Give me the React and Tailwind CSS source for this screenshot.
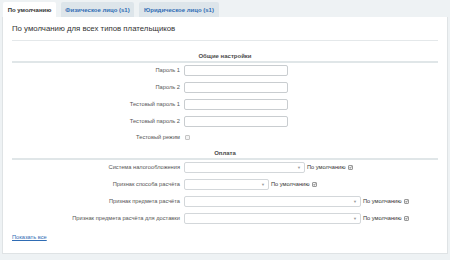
import React from "react";

const F = { fontFamily: '"Liberation Sans", Arial, sans-serif' };

function Label({ children }) {
  return (
    <div className="w-[172px] shrink-0 text-right pr-[4px] text-[5.7px] text-[#555] leading-none">{children}</div>
  );
}

function Input() {
  return <div className="w-[104px] h-[11px] bg-white border border-[#c9cdd0] rounded-[2px]" />;
}

function Select({ w }) {
  return (
    <div className={`${w} h-[11px] bg-white border border-[#d3d7da] rounded-[2px] flex items-center justify-end pr-[3px]`}>
      <div className="text-[4px] text-[#999] leading-none">▼</div>
    </div>
  );
}

function Check({ checked }) {
  return (
    <div className={`w-[5px] h-[5px] border ${checked ? "border-[#999]" : "border-[#c4c4c4]"} bg-[#f4f4f4] rounded-[1px] flex items-center justify-center`}>
      {checked && (
        <svg width="5" height="5" viewBox="0 0 5 5">
          <path d="M0.8 2.6 L2 3.8 L4.3 0.9" stroke="#333" strokeWidth="1" fill="none" />
        </svg>
      )}
    </div>
  );
}

function Default() {
  return (
    <div className="flex items-center ml-[2px]">
      <div className="text-[5.7px] text-[#333] leading-none">По умолчанию</div>
      <div className="ml-[3px]"><Check checked /></div>
    </div>
  );
}

function Section({ title, mt }) {
  return (
    <div className={`flex flex-col ${mt}`}>
      <div className="text-center text-[6px] font-bold text-[#4b4b4b] leading-none h-[6px]">{title}</div>
      <div className="mt-[2px] h-[2px] bg-[#e0e6e8]" />
    </div>
  );
}

export default function App() {
  return (
    <div className="w-[450px] h-[260px] bg-[#eef2f4] pt-[2px] pl-[2px]" style={F}>
      <div className="flex items-end h-[15px] pl-[1px]">
        <div className="w-[53px] h-[15px] bg-white rounded-t-[2px] flex items-center justify-center text-[6px] font-bold text-[#333] leading-none">
          По умолчанию
        </div>
        <div className="ml-[5px] w-[73px] h-[15px] bg-[#dde5ea] rounded-t-[2px] flex items-center justify-center text-[6px] font-bold text-[#2f6cb4] leading-none">
          Физическое лицо (s1)
        </div>
        <div className="ml-[5px] w-[80px] h-[15px] bg-[#dde5ea] rounded-t-[2px] flex items-center justify-center text-[6px] font-bold text-[#2f6cb4] leading-none">
          Юридическое лицо (s1)
        </div>
      </div>
      <div className="w-[446px] h-[237px] bg-white border border-[#dfe3e5] border-t-0 pl-[9px] pr-[9px] pt-[7px]">
        <div className="text-[7.8px] text-[#333] leading-[10px] h-[10px] whitespace-nowrap">
          По умолчанию для всех типов плательщиков
        </div>
        <div className="mt-[6px] h-[1px] bg-[#e4e8ea]" />
        <Section title="Общие настройки" mt="mt-[12px]" />
        <div className="flex flex-col -mt-[1px]">
          {["Пароль 1", "Пароль 2", "Тестовый пароль 1", "Тестовый пароль 2"].map((l) => (
            <div key={l} className="flex items-center h-[17px]">
              <Label>{l}</Label>
              <Input />
            </div>
          ))}
          <div className="flex items-center h-[15px]">
            <Label>Тестовый режим</Label>
            <div className="ml-[1px]"><Check /></div>
          </div>
        </div>
        <Section title="Оплата" mt="mt-[5px]" />
        <div className="flex flex-col -mt-[1px]">
          <div className="flex items-center h-[17px]">
            <Label>Система налогообложения</Label>
            <Select w="w-[121px]" />
            <Default />
          </div>
          <div className="flex items-center h-[17px]">
            <Label>Признак способа расчёта</Label>
            <Select w="w-[85px]" />
            <Default />
          </div>
          <div className="flex items-center h-[17px]">
            <Label>Признак предмета расчёта</Label>
            <Select w="w-[177px]" />
            <Default />
          </div>
          <div className="flex items-center h-[17px]">
            <Label>Признак предмета расчёта для доставки</Label>
            <Select w="w-[177px]" />
            <Default />
          </div>
        </div>
        <div className="mt-[7px] text-[5.7px] leading-[6px] h-[6px]">
          <span className="text-[#2f6cb4] underline">Показать все</span>
        </div>
      </div>
    </div>
  );
}
